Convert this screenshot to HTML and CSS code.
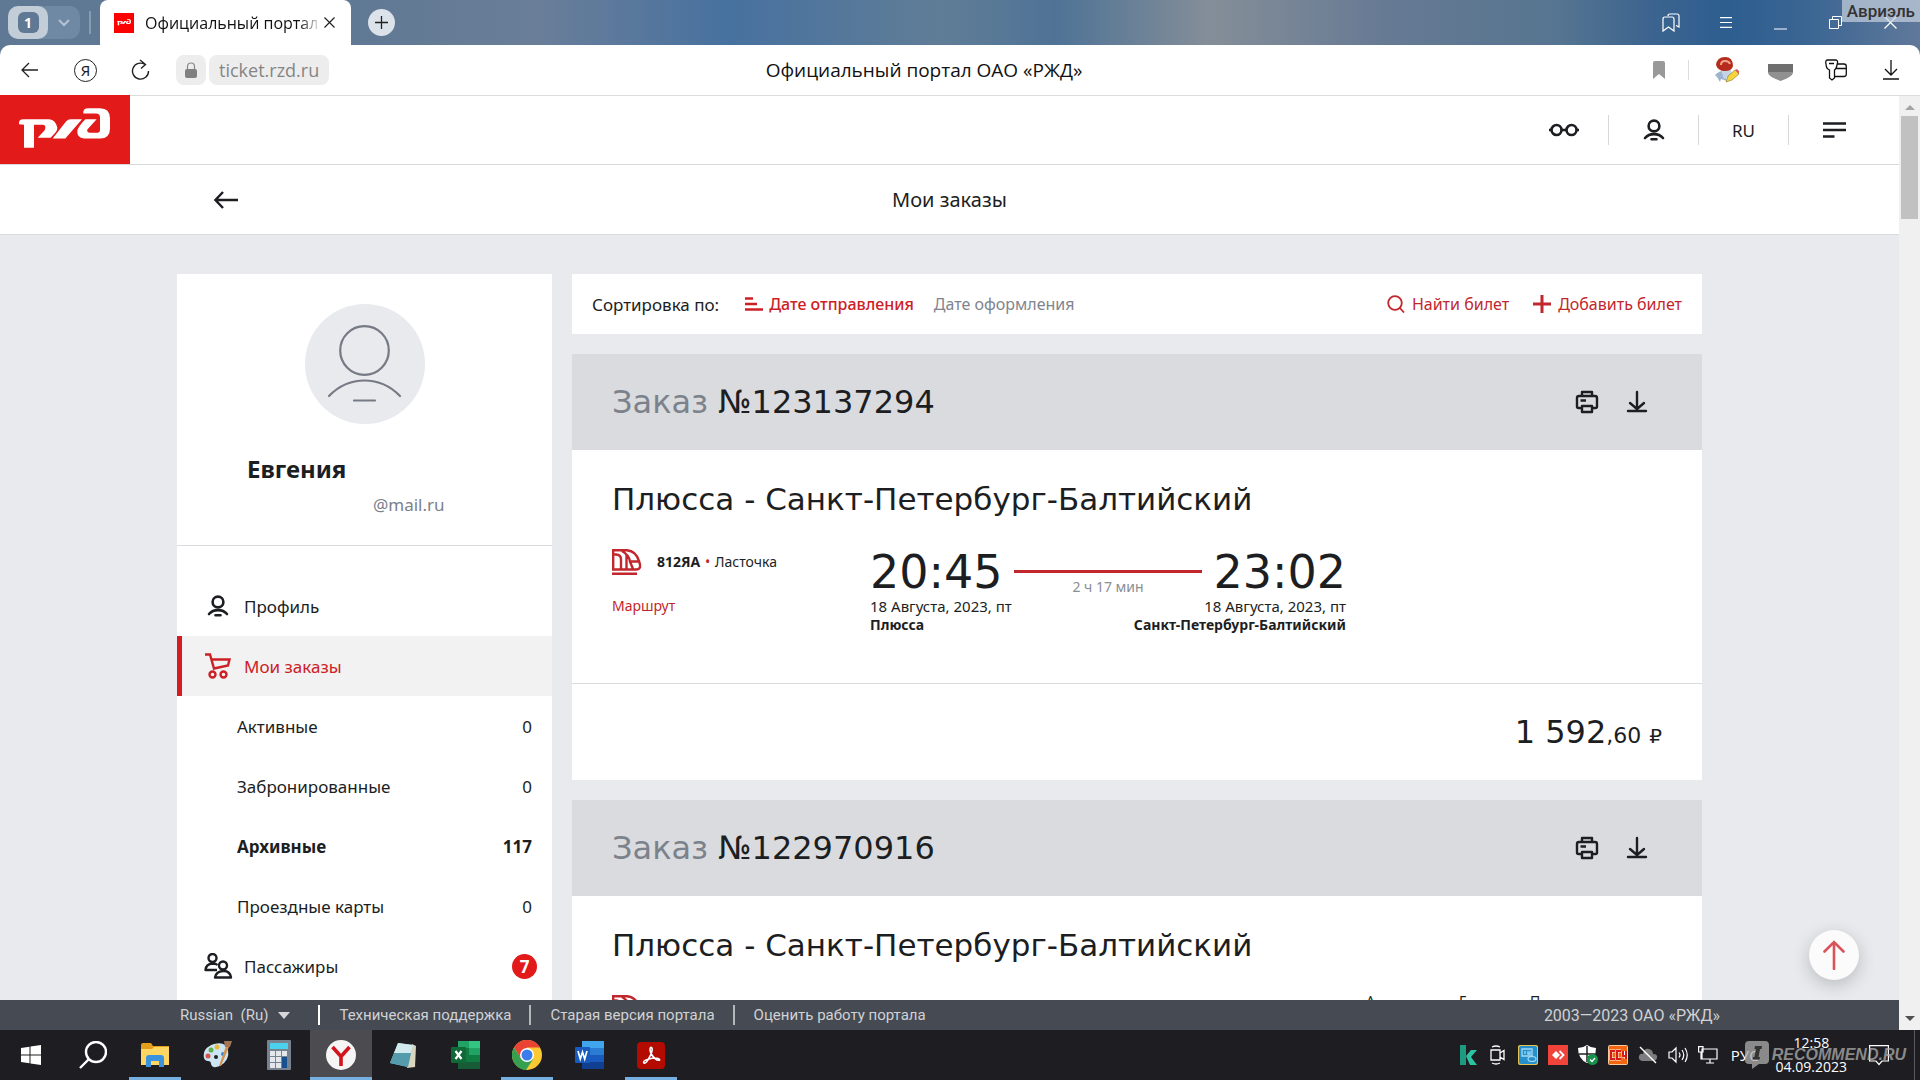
FILE: index.html
```html
<!DOCTYPE html>
<html lang="ru">
<head>
<meta charset="utf-8">
<title>Официальный портал ОАО «РЖД»</title>
<link rel="stylesheet" href="styles.css">
</head>
<body>
<svg class="sprite" aria-hidden="true">
  <symbol id="user" viewBox="0 0 24 24"><g fill="none" stroke="currentColor" stroke-width="2.600" stroke-linecap="round"><circle cx="12" cy="8" r="5.4"/><path d="M3 20C7.500 14.800 16.500 14.800 21 20M9.500 21.200H14.500"/></g></symbol>
  <symbol id="rzd" viewBox="0 285 390 206"><path fill="#fff" d="M57 372Q55 357 70 357H148Q166 358 172 382Q173 388 167 396L152 413H113L134 390Q141 374 126 374H102V443H72V374ZM158 415L198 364Q204 357 212 357H246L196 415ZM250 340Q248 324 265 324H300Q330 324 330 355V385Q330 415 300 415H252Q230 413 232 390Q236 378 256 357H290L262 388Q260 398 270 398H292Q300 398 300 388V352Q300 340 288 340Z"/></symbol>
  <symbol id="printer" viewBox="0 0 24 24"><g fill="none" stroke="currentColor" stroke-width="2.400" stroke-linejoin="round"><path d="M7 6V2H17V6M7 18H3.500Q2 18 2 16.500V8Q2 6 4 6H20Q22 6 22 8V16.500Q22 18 20.500 18H17M7 16H17V22H7ZM5.500 10.500H11"/></g></symbol>
  <symbol id="download" viewBox="0 0 24 24"><path fill="none" stroke="currentColor" stroke-width="2.400" stroke-linecap="round" stroke-linejoin="round" d="M12 2V18M5 13L12 19L19 13M3 21H21"/></symbol>
  <symbol id="train" viewBox="0 0 30 26"><g fill="none" stroke="currentColor" stroke-width="2.400"><path d="M1.200 1.200H15Q24 2 27 12Q28.500 16 28 18Q27.500 20.500 24 20.500H1.200ZM1.200 5.500H4Q9 6 9 10V20.500M10 2Q17 6 18 12.500H27M14.500 5V20.500M18 12.500L21 20M0 24.800H25"/></g></symbol>
</svg>

<div class="screen">
  <div class="titlebar">
    <div class="tab-group">
      <button class="tab-count" aria-label="Группа вкладок"><span>1</span></button>
      <button class="tab-more" aria-label="Список вкладок"><svg width="12" height="8" viewBox="0 0 12 8"><path d="M1 1L6 6L11 1" fill="none" stroke="#b4c3d3" stroke-width="2"/></svg></button>
    </div>
    <span class="tab-divider"></span>
    <div class="tab">
      <span class="favicon"><svg width="20" height="11"><use href="#rzd"/></svg></span>
      <span class="tab-title">Официальный портал ОАО «РЖД»</span>
      <button class="plain" aria-label="Закрыть вкладку"><svg width="11" height="11" viewBox="0 0 11 11"><path d="M.5 .5L10.500 10.500M10.500 .5L.5 10.500" stroke="#222" stroke-width="1.200"/></svg></button>
    </div>
    <button class="new-tab" aria-label="Новая вкладка"><svg width="13" height="13" viewBox="0 0 13 13"><path d="M6.500 0V13M0 6.500H13" stroke="#222" stroke-width="1.300"/></svg></button>
    <div class="window-buttons">
      <button aria-label="Закладки"><svg width="18" height="20" viewBox="0 0 18 20" fill="none" stroke="#fff" stroke-width="1.200"><path d="M1 18V6Q1 4 3 4H10Q12 4 12 6V18L6.500 14ZM6 3Q6 1 8 1H15Q17 1 17 3V14L14 12.500"/></svg></button>
      <button aria-label="Меню"><svg width="12" height="11" viewBox="0 0 12 11"><path d="M0 .6H12M0 5.500H12M0 10.400H12" stroke="#fff" stroke-width="1.200"/></svg></button>
      <button class="low" aria-label="Свернуть"><svg width="13" height="2"><path d="M0 1H13" stroke="#fff"/></svg></button>
      <button aria-label="Развернуть"><svg width="13" height="13" viewBox="0 0 13 13" fill="none" stroke="#fff"><path d="M.5 3.500H9.500V12.500H.5ZM3.500 3.500V.5H12.500V9.500H9.500"/></svg></button>
      <button aria-label="Закрыть"><svg width="13" height="13" viewBox="0 0 13 13"><path d="M.5 .5L12.500 12.500M12.500 .5L.5 12.500" stroke="#fff" stroke-width="1.200"/></svg></button>
    </div>
    <span class="author">Авриэль</span>
  </div>

  <div class="toolbar">
    <div class="nav">
      <button aria-label="Назад"><svg width="17" height="16" viewBox="0 0 17 16"><path d="M8 1L1 8L8 15M1 8H17" fill="none" stroke="#222" stroke-width="1.300"/></svg></button>
      <button class="ya" aria-label="Яндекс">Я</button>
      <button aria-label="Обновить"><svg width="19" height="22" viewBox="0 0 19 22"><path d="M17.500 12A8 8 0 1 1 14 5.500M9 1L14.500 5.500L10 9.500" fill="none" stroke="#222" stroke-width="1.400"/></svg></button>
      <span class="lock"><svg width="12" height="16" viewBox="0 0 12 16"><path d="M2.500 8V4.500Q2.500 1 6 1T9.500 4.500V8" fill="none" stroke="#888" stroke-width="1.200"/><rect y="7" width="12" height="9" rx="2" fill="#808080"/></svg></span>
      <a class="url" href="#">ticket.rzd.ru</a>
    </div>
    <span class="page-title">Официальный портал ОАО «РЖД»</span>
    <div class="extensions">
      <button class="mark" aria-label="В закладки"><svg width="12" height="18" viewBox="0 0 12 18"><path d="M0 2Q0 0 2 0H10Q12 0 12 2V18L6 13L0 18Z" fill="#999"/></svg></button>
      <button aria-label="Расширение"><svg width="26" height="26" viewBox="0 0 26 26"><path d="M2 18Q8 13 11 14L14 24L8 22L7 25L4 20Z" fill="#9db4cf"/><path d="M8 13H18L19 18L11 22Z" fill="#c4d4e6"/><path d="M3 8Q4 0 12 0T20 9Q19 14 12 14T3 8" fill="#b52c1c"/><path d="M8 8Q8 4 12 4T17 7" fill="none" stroke="#f0a48c" stroke-width="2"/><path d="M13 25L15 19L22 13L26 17L19 23Z" fill="#f3d43a" stroke="#8d762b" stroke-width=".6"/><path d="M22 13L24 12L26 14V17Z" fill="#dd5c67"/></svg></button>
      <button class="pocket" aria-label="Покупки"><svg width="25" height="17" viewBox="0 0 25 17"><path d="M0 0H25V9Q24 13 12.500 17Q1 13 0 9Z" fill="#919191"/><path d="M0 0H25V8H0Z" fill="#6f6f6f"/></svg></button>
      <button aria-label="Пароли"><svg width="22" height="22" viewBox="0 0 22 22" fill="none" stroke="#111" stroke-width="1.300"><path d="M2.500 1H10.500Q13 1 12.500 4L11.500 8Q11 10 9.500 11V19L7 21L4.500 19V11Q2 10 1.500 8L.8 4Q.5 1 2.500 1ZM4 4.500H9M12.500 5H19Q21.300 5 21.300 7.500V15Q21.300 17.500 19 17.500H9.500M11.500 9.500H21"/></svg></button>
      <button aria-label="Загрузки"><svg width="16" height="20" viewBox="0 0 16 20"><path d="M8 0V15M2 9L8 15L14 9M0 19H16" fill="none" stroke="#111" stroke-width="1.300"/></svg></button>
    </div>
  </div>

  <div class="viewport">
    <div class="page">
      <header class="site-header">
        <a class="logo" href="#" aria-label="РЖД"><svg width="130" height="69"><use href="#rzd"/></svg></a>
        <nav class="header-menu">
          <button aria-label="Версия для слабовидящих"><svg width="30" height="14" viewBox="0 0 30 14" fill="none" stroke="#1c1e22" stroke-width="2.600"><circle cx="7.500" cy="7" r="5"/><circle cx="22.500" cy="7" r="5"/><path d="M0 7H2.500M12.500 7H17.500M27.500 7H30"/></svg></button>
          <button aria-label="Личный кабинет"><svg width="24" height="24"><use href="#user"/></svg></button>
          <button>RU</button>
          <button aria-label="Меню"><svg width="23" height="16" viewBox="0 0 23 16"><path d="M0 1.500H23M0 8H23M0 14.500H11.500" stroke="#1c1e22" stroke-width="2.600"/></svg></button>
        </nav>
      </header>
      <div class="subheader">
        <a class="back" href="#" aria-label="Назад"><svg width="25" height="18" viewBox="0 0 25 18"><path d="M9 1L1.500 9L9 17M2 9H24" fill="none" stroke="#1c1e22" stroke-width="2.400"/></svg></a>
        <h1>Мои заказы</h1>
      </div>

      <div class="content">
        <aside class="sidebar">
          <div class="profile">
            <span class="avatar"><svg width="74" height="78" viewBox="0 0 74 78" fill="none" stroke="#767a85" stroke-width="2.200" stroke-linecap="round"><circle cx="36.500" cy="25.500" r="24.300"/><path d="M1 71Q16 55.500 36.500 55.500T72 71M26 75.500H47"/></svg></span>
            <h2>Евгения</h2>
            <p>@mail.ru</p>
          </div>
          <nav class="menu">
            <a href="#"><svg class="menu-icon" width="24" height="24"><use href="#user"/></svg><span>Профиль</span></a>
            <a class="current" href="#"><svg class="menu-icon" width="26" height="26" viewBox="0 0 26 26" fill="none" stroke="currentColor" stroke-width="2.400"><path d="M0 1.500H5L9 15.500L23 12.500L24.500 6.500H6.500"/><circle cx="7.500" cy="21.500" r="3"/><circle cx="18.500" cy="21.500" r="3"/></svg><span>Мои заказы</span></a>
            <a class="sub" href="#"><span>Активные</span><span>0</span></a>
            <a class="sub" href="#"><span>Забронированные</span><span>0</span></a>
            <a class="sub bold" href="#"><span>Архивные</span><span>117</span></a>
            <a class="sub" href="#"><span>Проездные карты</span><span>0</span></a>
            <a href="#"><svg class="menu-icon" width="28" height="26" viewBox="0 0 28 26" fill="none" stroke="currentColor" stroke-width="2.400" stroke-linejoin="round"><circle cx="8.500" cy="5" r="4"/><path d="M13 17H1.500Q2 11 8.500 10.500Q12 10.500 13.500 12"/><circle cx="19" cy="12.500" r="4"/><path d="M11 24.500Q12 18.500 19 18T27 24.500Z"/></svg><span>Пассажиры</span><span class="badge">7</span></a>
          </nav>
        </aside>

        <main class="orders">
          <div class="sortbar">
            <span class="sort-label">Сортировка по:</span>
            <button class="sort active"><svg width="18" height="14" viewBox="0 0 18 14"><path d="M0 1.500H8M0 7H12M0 12.500H18" stroke="currentColor" stroke-width="2.600"/></svg>Дате отправления</button>
            <button class="sort">Дате оформления</button>
            <div class="sort-actions">
              <button><svg width="18" height="18" viewBox="0 0 18 18" fill="none" stroke="currentColor" stroke-width="1.800"><circle cx="8" cy="8" r="6.800"/><path d="M12.500 12.500L17 17.500"/></svg>Найти билет</button>
              <button><svg width="18" height="18" viewBox="0 0 18 18"><path d="M9 0V18M0 9H18" stroke="currentColor" stroke-width="3"/></svg>Добавить билет</button>
            </div>
          </div>

          <article class="order">
            <header>
              <h2><span>Заказ</span> №123137294</h2>
              <button aria-label="Печать"><svg width="24" height="24"><use href="#printer"/></svg></button>
              <button aria-label="Скачать"><svg width="24" height="24"><use href="#download"/></svg></button>
            </header>
            <div class="trip">
              <h3>Плюсса - Санкт-Петербург-Балтийский</h3>
              <div class="trip-row">
                <div class="train">
                  <div class="train-name"><svg width="30" height="26"><use href="#train"/></svg><p><b>812ЯА</b> <i>•</i> Ласточка</p></div>
                  <a href="#">Маршрут</a>
                </div>
                <div class="route">
                  <div class="times"><time>20:45</time><span class="duration">2 ч 17 мин</span><time>23:02</time></div>
                  <div class="stops"><p><span>18 Августа, 2023, пт</span><b>Плюсса</b></p><p><span>18 Августа, 2023, пт</span><b>Санкт-Петербург-Балтийский</b></p></div>
                </div>
              </div>
            </div>
            <footer><strong>1 592</strong>,60 <small>₽</small></footer>
          </article>

          <article class="order">
            <header>
              <h2><span>Заказ</span> №122970916</h2>
              <button aria-label="Печать"><svg width="24" height="24"><use href="#printer"/></svg></button>
              <button aria-label="Скачать"><svg width="24" height="24"><use href="#download"/></svg></button>
            </header>
            <div class="trip">
              <h3>Плюсса - Санкт-Петербург-Балтийский</h3>
              <div class="trip-row">
                <div class="train">
                  <div class="train-name"><svg width="30" height="26"><use href="#train"/></svg></div>
                </div>
                <div class="route"></div>
                <div class="passenger"><span>А</span><span>Е</span><span>П</span></div>
              </div>
            </div>
          </article>
        </main>
      </div>

      <footer class="site-footer">
        <nav>
          <button class="language">Russian&nbsp; (Ru)<svg width="12" height="7" viewBox="0 0 12 7"><path d="M0 0H12L6 7Z" fill="#d4d6d9"/></svg></button>
          <a href="#">Техническая поддержка</a>
          <a href="#">Старая версия портала</a>
          <a href="#">Оценить работу портала</a>
        </nav>
        <span class="copyright">2003—2023 ОАО «РЖД»</span>
      </footer>
      <button class="to-top" aria-label="Наверх"><svg width="22" height="30" viewBox="0 0 22 30"><path d="M11 29V2M1.500 11.500L11 2L20.500 11.500" fill="none" stroke="#d9545a" stroke-width="2.600" stroke-linecap="round"/></svg></button>
    </div>
    <div class="scrollbar">
      <svg width="10" height="5" viewBox="0 0 10 5"><path d="M0 5L5 0L10 5Z" fill="#a3a3a3"/></svg>
      <span class="thumb"></span>
      <svg width="10" height="5" viewBox="0 0 10 5"><path d="M0 0L5 5L10 0Z" fill="#505050"/></svg>
    </div>
  </div>

  <div class="taskbar">
    <div class="apps">
      <button aria-label="Пуск"><svg width="20" height="20" viewBox="0 0 20 20" fill="#fff"><path d="M0 3L8.500 1.800V9.500H0ZM9.500 1.600L20 0V9.500H9.500ZM0 10.500H8.500V18.200L0 17ZM9.500 10.500H20V20L9.500 18.400Z"/></svg></button>
      <button aria-label="Поиск"><svg width="28" height="28" viewBox="0 0 28 28" fill="none" stroke="#fff" stroke-width="2.400"><circle cx="17" cy="11" r="10"/><path d="M10 18L1 27"/></svg></button>
      <button class="open" aria-label="Проводник"><svg width="28" height="24" viewBox="0 0 28 24"><path d="M0 2Q0 0 2 0H10L12 3H28V8H0Z" fill="#e39f1c"/><path d="M0 6H11L13 4H28V22H0Z" fill="#ffd661"/><path d="M5 24V15Q5 12 8 12H20Q23 12 23 15V24H18V18H10V24Z" fill="#3a93dc"/></svg></button>
      <button aria-label="Paint"><svg width="30" height="30" viewBox="0 0 30 30"><path d="M2 18Q0 8 12 4Q24 1 26 10Q28 20 18 26Q10 29 9 24Q9 21 6 21Q3 21 2 18" fill="#cde5f3"/><circle cx="6" cy="16" r="2.500" fill="#d4544c"/><circle cx="9" cy="10" r="2.500" fill="#5fae4a"/><circle cx="15" cy="7" r="2.500" fill="#e8ba3b"/><circle cx="21" cy="14" r="2" fill="#3a87cc"/><circle cx="14" cy="17" r="2" fill="#222"/><path d="M17 26L24 6L27 7L19 26Z" fill="#d4924d"/><path d="M22 1L30 1L28 7L23 7Z" fill="#a17555"/></svg></button>
      <button aria-label="Калькулятор"><svg width="24" height="30" viewBox="0 0 24 30"><rect width="24" height="30" rx="1" fill="#76838f"/><rect x="3" y="3" width="18" height="6" fill="#4bd0ee"/><path d="M3 11H8V16H3ZM9 11H14V16H9ZM15 11H20V16H15ZM3 17H8V22H3ZM9 17H14V22H9ZM3 23H8V28H3ZM9 23H14V28H9Z" fill="#e4e8ec"/><path d="M15 17H20V28H15Z" fill="#174f8f"/></svg></button>
      <button class="open focused" aria-label="Яндекс Браузер"><svg width="30" height="30" viewBox="0 0 30 30"><circle cx="15" cy="15" r="15" fill="#f5f5f5"/><path d="M6.500 7L15 16.500V26M23.500 7L15 16.500" fill="none" stroke="#d1151c" stroke-width="3.600"/></svg></button>
      <button aria-label="Блокнот"><svg width="28" height="28" viewBox="0 0 28 28"><path d="M23 3L27 5L26 26L18 27Z" fill="#d9d5be"/><path d="M9 2L24 4L19 26L1 22Z" fill="#9ccfd9"/><path d="M9 2L24 4L22 12L5 12Z" fill="#d0eaee"/><path d="M5 12L22 12L19 26L1 22Z" fill="#549cab"/></svg></button>
      <button aria-label="Excel"><svg width="29" height="28" viewBox="0 0 29 28"><path d="M7 0H29V28H7Z" fill="#107c41"/><path d="M7 0H18V7H7Z" fill="#21a366"/><path d="M18 0H29V7H18Z" fill="#33c481"/><path d="M18 7H29V14H18Z" fill="#21a366"/><path d="M7 21H29V28H7Z" fill="#185c37"/><rect y="6" width="15" height="16" rx="1" fill="#0f6a38"/><path d="M4.500 10L10.500 18M10.500 10L4.500 18" stroke="#fff" stroke-width="2.200"/></svg></button>
      <button class="open" aria-label="Chrome"><svg width="30" height="30" viewBox="0 0 30 30"><circle cx="15" cy="15" r="15" fill="#fcc934"/><path d="M2 7.500A15 15 0 0 1 28 7.500H15L9 18.500Z" fill="#ea4335"/><path d="M2 7.500A15 15 0 0 0 14 30L21.500 18.500H9Z" fill="#34a050"/><circle cx="15" cy="15" r="7" fill="#fff"/><circle cx="15" cy="15" r="5.500" fill="#3b7ded"/></svg></button>
      <button aria-label="Word"><svg width="29" height="28" viewBox="0 0 29 28"><path d="M7 0H29V28H7Z" fill="#2b7cd3"/><path d="M7 0H29V7H7Z" fill="#41a5ee"/><path d="M7 14H29V21H7Z" fill="#185abd"/><path d="M7 21H29V28H7Z" fill="#103f91"/><rect y="6" width="15" height="16" rx="1" fill="#185abd"/><path d="M3 10L5.300 18L7.500 11L9.700 18L12 10" fill="none" stroke="#fff" stroke-width="1.700"/></svg></button>
      <button class="open" aria-label="Acrobat"><svg width="28" height="27" viewBox="0 0 28 27"><rect width="28" height="27" rx="4" fill="#b30b00"/><path d="M7 21Q5 19 12 17T22 17Q24 19 20 18Q14 14 13 8Q13 4 15 6Q16 9 12 16Q9 22 7 21Z" fill="none" stroke="#fff" stroke-width="1.600"/></svg></button>
    </div>
    <div class="tray">
      <svg width="18" height="20" viewBox="0 0 18 20"><path d="M1 0H7V20H1Z" fill="#1c9b80"/><path d="M7 11L12 5H18L12 12L18 20H11Z" fill="#2bc4a0"/></svg>
      <svg width="18" height="20" viewBox="0 0 18 20" fill="none" stroke="#fff" stroke-width="1.300"><path d="M2 5H11V15H2ZM11 8L15 5.500V14.500L11 12M3 2Q7 0 11 2M3 18Q7 20 11 18"/></svg>
      <svg width="20" height="20" viewBox="0 0 20 20"><rect width="20" height="20" rx="2" fill="#e5c454"/><rect width="18" height="18" x="1" y="1" rx="2" fill="#2590cc"/><path d="M4 4H14V11H4ZM7 6V9M10 6V9H12V6" fill="none" stroke="#a5d8f5" stroke-width="1.300"/><ellipse cx="14" cy="14" rx="4" ry="2.500" fill="none" stroke="#a5d8f5" stroke-width="1.200"/></svg>
      <svg width="20" height="20" viewBox="0 0 20 20"><rect width="20" height="20" fill="#f0443b"/><path d="M4 10L8 6L12 10L8 14Z" fill="#fff"/><path d="M11.500 6L15.500 10L11.500 14" fill="none" stroke="#fff" stroke-width="1.800"/></svg>
      <svg width="20" height="20" viewBox="0 0 20 20"><path d="M9 0Q13 3 18 3Q18 14 9 18Q0 14 0 3Q5 3 9 0" fill="#fff"/><path d="M9 1V17M1 9H17" stroke="#222" stroke-width="1.500"/><circle cx="14.500" cy="14.500" r="5.500" fill="#16924a"/><path d="M12 14.500L14 16.500L17 13" fill="none" stroke="#fff" stroke-width="1.300"/></svg>
      <svg width="20" height="20" viewBox="0 0 20 20"><rect width="20" height="20" rx="2" fill="#f6c99c"/><rect x="1" y="1" width="18" height="18" fill="#f1660f"/><path d="M7 6H3V14H7M13 6H9V14H13M15 6V11H19M18 6V14" fill="none" stroke="#fff" stroke-width="3"/><path d="M7 6H3V14H7M13 6H9V14H13M15 6V11H19M18 6V14" fill="none" stroke="#d81b12" stroke-width="2"/></svg>
      <svg width="20" height="18" viewBox="0 0 20 18"><path d="M4 15Q0 14 1 10Q2 7 5 8Q6 2 11 3Q15 4 15 8Q20 8 19 12Q18 15 15 15Z" fill="#7d7d7f"/><path d="M2 1L18 17" stroke="#fff" stroke-width="1.500"/></svg>
      <svg width="20" height="18" viewBox="0 0 20 18" fill="none" stroke="#fff" stroke-width="1.200"><path d="M1 6H4L8 2V16L4 12H1ZM11 6.500Q13 9 11 11.500M14 4Q17.500 9 14 14M17 2Q21.500 9 17 16"/></svg>
      <svg width="20" height="18" viewBox="0 0 20 18" fill="none" stroke="#fff" stroke-width="1.200"><path d="M4 3H19V13H4ZM8 17H16M12 13V17M.6 .6H5V6H.6ZM3 6V13H4"/></svg>
      <span>РУС</span>
      <time class="clock">12:58<br>04.09.2023</time>
      <button class="notices" aria-label="Уведомления"><svg width="20" height="21" viewBox="0 0 20 21"><path d="M.6 .6H19.400V16H13L10 19.500L7 16H.6Z" fill="none" stroke="#fff" stroke-width="1.200"/></svg></button>
    </div>
    <div class="watermark"><svg width="24" height="28" viewBox="0 0 24 28"><path d="M4 0H20Q24 0 24 4V19Q24 23 20 23H14L7 28V23H4Q0 23 0 19V4Q0 0 4 0Z" fill="currentColor"/><path d="M10 5H17L16.500 8H15L13.500 16H15L14.500 18.500H7.500L8 16H9.500L11 8H9.500Z" fill="#333"/></svg><span>RECOMMEND.RU</span></div>
  </div>
</div>
</body>
</html>
```
FILE: styles.css
```css
* { box-sizing: border-box; }
body { margin: 0; font-family: "Noto Sans", sans-serif; font-size: 17px; color: #1c1e22; }
h1, h2, h3, p { margin: 0; font-weight: 400; }
a { color: inherit; text-decoration: none; }
button { border: 0; padding: 0; background: none; font: inherit; color: inherit; display: flex; align-items: center; justify-content: center; }
svg { display: block; flex: none; }
.sprite { width: 0; height: 0; position: absolute; }

.screen { height: 100vh; display: grid; grid-template-rows: 45px 51px minmax(0, 1fr) 50px; overflow: hidden; background: #5e7893; }

/* browser window */
.titlebar { position: relative; display: flex; align-items: center; background: linear-gradient(90deg, #5f7893 0%, #5f7893 18%, #6a7e99 28%, #47719f 38%, #607d96 49%, #4f7396 55%, #848e98 63%, #677a94 72%, #567590 81%, #3c648f 86%, #2d5e8f 90%, #3a6593 94%, #60789a 100%); }
.tab-group { display: flex; width: 72px; height: 33px; margin-left: 8px; border-radius: 10px; background: #6f88a3; }
.tab-count { width: 40px; border-radius: 10px; background: #c3cdd8; }
.tab-count span { width: 21px; height: 21px; border-radius: 6px; background: #5f7893; color: #fff; font-size: 14px; font-weight: 700; line-height: 21px; }
.tab-more { flex: 1; }
.tab-divider { width: 2px; height: 23px; margin: 0 9px; background: #879bb1; }
.tab { display: flex; align-items: center; align-self: stretch; width: 251px; padding: 0 16px 0 14px; border-radius: 8px 8px 0 0; background: #fff; color: #111; }
.favicon { width: 20px; height: 20px; margin-right: 11px; display: flex; align-items: center; background: #f00; }
.tab-title { flex: 1; min-width: 0; overflow: hidden; white-space: nowrap; font-family: "Open Sans", sans-serif; font-size: 16px; -webkit-mask-image: linear-gradient(90deg, #000 88%, transparent 100%); mask-image: linear-gradient(90deg, #000 88%, transparent 100%); }
.tab .plain { margin-left: 3px; }
.new-tab { width: 27px; height: 27px; margin-left: 17px; border-radius: 50%; background: #dbe2ea; }
.window-buttons, .extensions { display: flex; align-self: stretch; margin-left: auto; padding-right: 2px; }
.window-buttons button, .extensions button { width: 55px; }
.window-buttons .low { padding-top: 12px; }
.author { position: absolute; right: 0; top: 0; padding: 0 5px; font-family: Roboto, sans-serif; font-size: 17px; font-weight: 500; line-height: 22px; background: rgba(200, 210, 222, .7); color: #333; }

.toolbar { display: grid; grid-template-columns: 1fr auto 1fr; align-items: center; border-bottom: 1px solid #dcdcdc; border-radius: 10px 10px 0 0; background: #fff; }
.nav { display: flex; align-items: center; padding-left: 2px; }
.nav button { width: 55px; height: 30px; }
.nav .ya { width: 23px; height: 23px; margin: 0 16px 0 17px; border: 1px solid #222; border-radius: 50%; font-size: 15px; }
.lock { width: 30px; height: 30px; margin: 0 3px 0 8px; display: flex; align-items: center; justify-content: center; border-radius: 8px; background: #ededed; }
.url { padding: 0 10px; border-radius: 8px; background: #ededed; color: #858585; font-family: "Open Sans", sans-serif; font-size: 18px; line-height: 30px; }
.page-title { margin-right: 72px; font-family: "Open Sans", sans-serif; font-size: 19px; color: #111; }
.extensions .mark { width: 60px; height: 20px; margin-right: 9px; border-right: 1px solid #ddd; align-self: center; }
.extensions .pocket { padding-top: 4px; }

/* page */
.viewport { display: flex; min-height: 0; background: #e8eaed; }
.page { position: relative; flex: 1; min-width: 0; display: flex; flex-direction: column; }
.site-header { display: flex; flex: none; height: 69px; border-bottom: 1px solid #d5d7da; background: #fff; }
.logo { height: 69px; margin-top: -1px; background: #e21a1a; }
.header-menu { display: flex; align-items: center; margin-left: auto; padding-right: 20px; }
.header-menu button { width: 90px; height: 30px; border-right: 1px solid #d5d7da; }
.header-menu button:last-child { border: 0; }
.subheader { display: grid; grid-template-columns: 1fr auto 1fr; align-items: center; flex: none; height: 70px; border-bottom: 1px solid #d9dbde; background: #fff; }
.subheader h1 { font-size: 20px; line-height: 28px; }
.back { margin-left: 214px; }

.content { display: grid; grid-template-columns: 375px minmax(0, 1fr); gap: 20px; flex: 1; min-height: 0; overflow: hidden; width: 100%; max-width: 1545px; margin: 0 auto; padding: 39px 20px 0 0; }
.sidebar { background: #fff; }
.profile { padding: 30px 0 28px; border-bottom: 1px solid #d9dbde; }
.avatar { display: flex; align-items: center; justify-content: center; width: 120px; height: 120px; margin: 0 auto 29px; border-radius: 50%; background: #e8eaed; }
.profile h2 { padding-left: 70px; font-size: 24px; font-weight: 700; line-height: 32px; }
.profile p { padding: 8px 0 0 196px; line-height: 24px; color: #7b818c; }
.menu { padding-top: 30px; }
.menu a { display: flex; align-items: center; height: 60px; padding: 0 15px 0 20px; border-left: 5px solid transparent; }
.menu-icon { width: 32px; margin-right: 10px; }
.menu .current { border-color: #d61c22; background: #f2f2f2; color: #cd2026; }
.menu .sub { justify-content: space-between; padding: 0 20px 0 55px; }
.menu .bold { font-weight: 700; }
.badge { width: 25px; height: 25px; margin-left: auto; border-radius: 50%; background: #e21a1a; color: #fff; font-weight: 700; line-height: 25px; text-align: center; }

.sortbar { display: flex; align-items: center; height: 60px; padding: 0 20px; background: #fff; font-size: 16px; }
.sort-label { font-size: 17px; margin-right: 26px; }
.sort { gap: 6px; margin-right: 20px; color: #7f858e; }
.sort.active { color: #cd2026; font-weight: 500; }
.sort-actions { display: flex; gap: 24px; margin-left: auto; color: #c1272d; }
.sort-actions button { gap: 7px; }

.order { margin-top: 20px; background: #fff; }
.order > header { display: flex; align-items: center; gap: 26px; height: 96px; padding: 0 53px 0 40px; background: #dadbdf; }
.order h2, .order h3, .times time, .order > footer { font-family: "DejaVu Sans", sans-serif; }
.order h2 { flex: 1; font-size: 32px; }
.order h2 span { color: #7b828b; }
.trip { height: 233px; padding: 27px 40px 0; }
.order h3 { font-size: 31px; line-height: 44px; }
.trip-row { display: flex; padding-top: 28px; font-size: 14px; line-height: 18px; }
.train { width: 258px; color: #c1272d; }
.train-name { display: flex; align-items: center; gap: 15px; height: 26px; margin-bottom: 22px; }
.train-name p { color: #1c1e22; }
.train i { margin: 0 1px; color: #c1272d; font-style: normal; }
.route { width: 476px; }
.times { display: flex; align-items: flex-start; gap: 11px; height: 48px; }
.times time { font-size: 46px; line-height: 46px; }
.duration { flex: 1; margin-top: 21px; border-top: 3px solid #c1272d; padding-top: 5px; text-align: center; color: #8a8e95; }
.stops { display: flex; justify-content: space-between; }
.stops p:last-child { text-align: right; }
.stops span { font-size: 15px; }
.stops b { display: block; }
.order > footer { display: flex; align-items: baseline; justify-content: flex-end; height: 97px; padding: 29px 40px 0; border-top: 1px solid #d9dbde; font-size: 22px; }
.order footer strong { font-size: 32px; font-weight: 400; }
.order footer small { font-size: 20px; margin-left: 8px; }
.passenger { display: grid; grid-template-columns: 93px 71px auto; padding-left: 20px; line-height: 12px; }

.site-footer { display: flex; align-items: center; justify-content: space-between; flex: none; height: 30px; padding: 0 179px 0 180px; background: #464a52; color: #d0d2d5; font-family: Roboto, sans-serif; font-size: 15px; }
.site-footer nav { display: flex; align-items: center; }
.site-footer nav a { padding-left: 19px; margin-left: 18px; border-left: 2px solid #b5b7ba; line-height: 20px; }
.site-footer .language + a { margin-left: 28px; border-color: #fff; }
.language { gap: 10px; }
.copyright { font-size: 16px; }
.to-top { position: absolute; right: 40px; bottom: 50px; width: 50px; height: 50px; border-radius: 50%; background: #fbfbfb; box-shadow: 0 5px 18px rgba(0, 0, 0, .2); }
.scrollbar { width: 21px; padding: 9px 0; display: flex; flex-direction: column; align-items: center; background: #f0f0f0; }
.thumb { width: 17px; height: 103px; margin: 6px 0 auto; background: #c1c1c1; }

/* desktop taskbar */
.taskbar { position: relative; display: flex; justify-content: space-between; background: #1e1e22; color: #fff; }
.apps { display: flex; }
.apps button { width: 62px; }
.apps .open { background: linear-gradient(#76b0e0, #76b0e0) bottom / 52px 3px no-repeat; }
.apps .focused { background-color: #4b4b50; background-size: 100% 3px; }
.tray { display: flex; align-items: center; gap: 10px; margin-right: 5px; border-right: 1px solid #5a5a5e; padding-right: 25px; font-family: "Open Sans", sans-serif; font-size: 15px; }
.tray > svg { width: 20px; }
.tray span { margin-left: 3px; }
.clock { margin: 0 12px 0 7px; font-size: 14px; line-height: 24px; text-align: center; }
.watermark { position: absolute; right: 14px; top: 11px; display: flex; align-items: center; gap: 3px; color: rgba(175, 175, 175, .75); font-family: "Liberation Sans", sans-serif; font-size: 16px; font-style: italic; font-weight: 700; }
```
